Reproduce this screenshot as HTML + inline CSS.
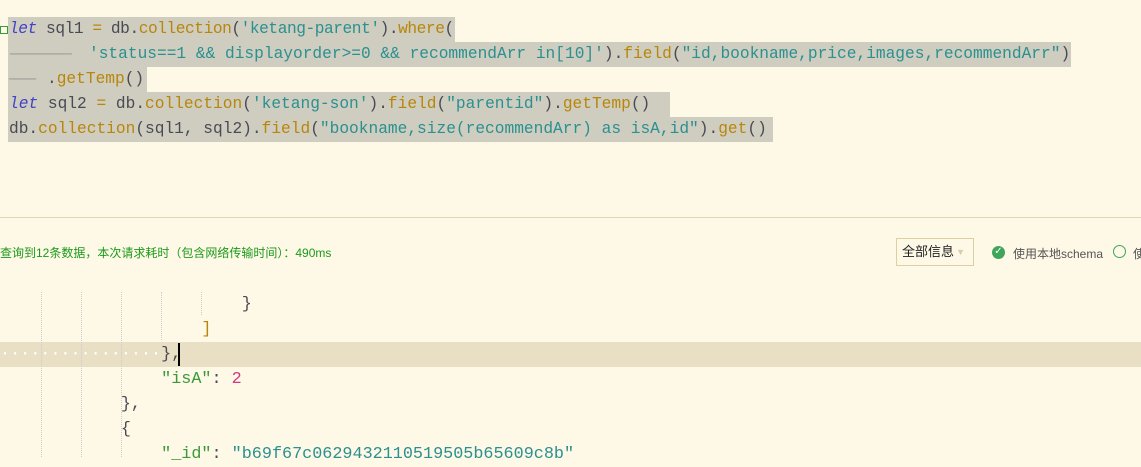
<!DOCTYPE html>
<html><head><meta charset="utf-8"><style>
body{margin:0;width:1141px;height:457px;overflow:hidden;background:#fef8e6;position:relative;font-family:"Liberation Mono",monospace}
.l{position:absolute;left:9px;height:25px;line-height:25px;font-size:16.2px;white-space:pre;color:#4a4a55}
.b{font-size:16.8px}
.hl{position:absolute;left:8px;height:25px;background:#cfcdbf}
.k{color:#4242c8;font-style:italic}.f{color:#b8860b}.s{color:#2a9090}.d{color:#9e9e9e}.n{color:#d33682}.g{color:#3a9a3a}
.guide{position:absolute;top:292px;bottom:0;border-left:1px dotted #ccc}
</style></head><body>
<div class="hl" style="top:17px;width:447px"></div>
<div class="hl" style="top:42px;width:1063px"></div>
<div class="hl" style="top:67px;width:139px"></div>
<div class="hl" style="top:92px;width:662px"></div>
<div class="hl" style="top:117px;width:765px"></div>
<div style="position:absolute;left:0;top:26px;width:6px;height:6px;border:1px solid #3a9a3a"></div>
<div class="l" style="top:17px;letter-spacing:-0.45px"><span class="k">let</span> sql1 <span class="f">=</span> db.<span class="f">collection</span>(<span class="s">'ketang-parent'</span>).<span class="f">where</span>(</div>
<div class="l" style="top:42px;left:10px"><span class="d" style="letter-spacing:-1px">———————</span></div>
<div class="l" style="top:42px;left:89px"><span class="s">'status==1 &amp;&amp; displayorder&gt;=0 &amp;&amp; recommendArr in[10]'</span>).<span class="f">field</span>(<span class="s">"id,bookname,price,images,recommendArr"</span>)</div>
<div class="l" style="top:67px"><span class="d" style="letter-spacing:-1px">———</span><span style="position:absolute;left:38px">.<span class="f">getTemp</span>()</span></div>
<div class="l" style="top:92px"><span class="k">let</span> sql2 <span class="f">=</span> db.<span class="f">collection</span>(<span class="s">'ketang-son'</span>).<span class="f">field</span>(<span class="s">"parentid"</span>).<span class="f">getTemp</span>()</div>
<div class="l" style="top:117px">db.<span class="f">collection</span>(sql1, sql2).<span class="f">field</span>(<span class="s">"bookname,size(recommendArr) as isA,id"</span>).<span class="f">get</span>()</div>
<div style="position:absolute;left:0;right:0;top:217px;border-top:1px solid #e4d8b0"></div>
<div style="position:absolute;left:0;top:244px;font:12px 'Liberation Sans','Noto Sans CJK SC',sans-serif;color:#1a9a1a">查询到12条数据，本次请求耗时（包含网络传输时间）：490ms</div>
<div style="position:absolute;left:896px;top:238px;width:78px;height:28px;border:1px solid #ddd0a0;font:13px 'Liberation Sans','Noto Sans CJK SC',sans-serif;line-height:26px;box-sizing:border-box;padding-left:5px;color:#222">全部信息<span style="position:absolute;right:8px;top:0;color:#d8ccaa;font-size:9px">▼</span></div>
<div style="position:absolute;left:992px;top:246px;width:13px;height:13px;border-radius:50%;background:#3ea55a;color:#fff;font-size:10px;line-height:13px;text-align:center">✓</div>
<div style="position:absolute;left:1013px;top:245px;font:12px 'Liberation Sans','Noto Sans CJK SC',sans-serif;color:#555">使用本地schema</div>
<div style="position:absolute;left:1113px;top:245px;width:11px;height:11px;border-radius:50%;border:1px solid #3ea55a"></div>
<div style="position:absolute;left:1133px;top:245px;font:12px 'Noto Sans CJK SC',sans-serif;color:#555">使</div>
<div style="position:absolute;left:0;right:0;top:342px;height:25px;background:#e8dfc4"></div>
<div class="guide" style="left:41px"></div><div class="guide" style="left:81px"></div><div class="guide" style="left:121px"></div>
<div class="guide" style="left:161px;bottom:117px"></div><div class="guide" style="left:201px;bottom:142px"></div>
<div class="l b" style="top:292px;left:0">                        }</div>
<div class="l b" style="top:317px;left:0">                    <span class="f">]</span></div>
<div class="l b" style="top:342px;left:0"><span style="color:#fff">················</span>},</div>
<div style="position:absolute;left:178px;top:343px;width:2px;height:23px;background:#000"></div>
<div class="l b" style="top:367px;left:0">                <span class="g">"isA"</span>: <span class="n">2</span></div>
<div class="l b" style="top:392px;left:0">            },</div>
<div class="l b" style="top:417px;left:0">            {</div>
<div class="l b" style="top:442px;left:0">                <span class="g">"_id"</span>: <span class="s">"b69f67c0629432110519505b65609c8b"</span></div>
</body></html>
